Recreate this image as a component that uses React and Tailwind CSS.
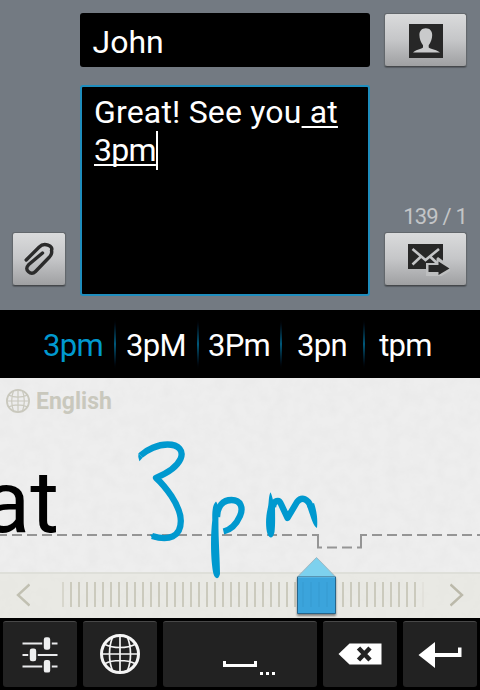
const candidates = ["3pm", "3pM", "3Pm", "3pn", "tpm"];
const ticks = Array.from({ length: 46 }, (_, i) => i);

const softButton =
  "flex h-[54px] items-center justify-center rounded-[3px] border border-[#62676c] border-b-[#45484b] bg-linear-to-b from-[#dadbdc] via-[#c5c6c8] to-[#9fa0a2] shadow-[0_1px_1px_rgba(0,0,0,0.25)]";

const composing = "underline decoration-2 underline-offset-[3px] [text-decoration-skip-ink:none]";

function ContactIcon() {
  return (
    <svg width="34" height="34" viewBox="0 0 34 34" className="mt-px">
      <rect width="34" height="34" fill="#272727" />
      <path
        d="M16.8 4.2C12.6 4.2 10.4 7 10.4 11c0 4 1.5 7.200 3.600 10.200v2.300C11.500 25.500 6 26 4 28.600h27C28.500 26 22.500 25.500 19.700 23.500v-2.300C21.800 18.200 23.200 15 23.200 11c0-4-2.200-6.800-6.400-6.800Z"
        fill="#c9cacb"
      />
    </svg>
  );
}

function ClipIcon() {
  return (
    <svg width="32" height="34" viewBox="0 0 32 34" fill="none" stroke="#2b2b2b" strokeWidth="3.4" strokeLinecap="round" strokeLinejoin="round">
      <path d="M3.200 18 16 5.200Q20 1.200 25 3.200T28.500 8.500Q29.500 12 26 15.500L12.500 29.500Q9 33 5.500 29.800T5.500 22.800L19.500 11" />
    </svg>
  );
}

function SendIcon() {
  return (
    <svg width="42" height="32" viewBox="0 0 42 32">
      <rect width="35" height="25" fill="#272727" />
      <path d="M4.500 5 17.500 16 31 5M4.500 20.500 13 12.500M22 12.500 30 20" fill="none" stroke="#c4c5c7" strokeWidth="2.600" />
      <path d="M18 19h10.500v-4.500L30 13 46 24.500 28.500 35H18Z" fill="#bebfc0" />
      <path d="M20.500 21H30.500v-3.500L41.500 24.500 30.500 31v-3H20.500Z" fill="#272727" />
    </svg>
  );
}

function Globe({ size, color, ring, line }) {
  return (
    <svg width={size} height={size} viewBox="0 0 40 40" fill="none" stroke={color} strokeWidth={line}>
      <circle cx="20" cy="20" r="18.500" strokeWidth={ring} />
      <path d="M20 2v36M2 20h36M12.500 3.500C8.500 13 8.500 27 12.500 36.500M27.500 3.500C31.500 13 31.500 27 27.500 36.500M5 10.500C13 14.500 27 14.500 35 10.500M5 29.500C13 25.500 27 25.500 35 29.500" />
    </svg>
  );
}

function SlidersIcon() {
  return (
    <svg width="36" height="38" viewBox="0 0 36 38">
      <path d="M0.500 7.500H35.500M0.500 19H35.500M0.500 30.500H35.500" stroke="#e9eaec" strokeWidth="2.200" />
      <g fill="#eeeff0" stroke="#222222" strokeWidth="1.600">
        <rect x="21" y="0.400" width="8" height="14.200" rx="3" />
        <rect x="7" y="11.800" width="8" height="14.200" rx="3" />
        <rect x="21" y="23.200" width="8" height="14.200" rx="3" />
      </g>
    </svg>
  );
}

function Key({ className, children }) {
  return (
    <div className={`flex items-center justify-center rounded-[3px] border-t border-[#484848] bg-[#222222] ${className}`}>
      {children}
    </div>
  );
}

function Ink() {
  return (
    <svg className="absolute inset-0" width="480" height="240" viewBox="0 378 480 240">
      <g fill="none" stroke="#959595" strokeWidth="2">
        <path d="M-3 535H317.500" strokeDasharray="10 5" />
        <path d="M312 535H318V547.500H322M327 547.500h10M342 547.500h10M357 547.500H361V535H367" />
        <path d="M372 535H480" strokeDasharray="10 5" />
      </g>
      <g fill="none" stroke="#0099cf" strokeWidth="6.300" strokeLinejoin="round">
        <path d="M140.500 455.500C147 449.500 158 444.500 167.500 444.500C179 444.500 184 451 180.500 459C176 469 164 474.500 156 477.800C164 485 180.800 505 180.800 521C180.800 537 169 541 152 536" />
        <path d="M217 517C217.500 506 223 500 231.500 500C241 500 243.500 508 240 516C236 525 230 530 223.500 531.500" />
        <path d="M273 507C274 500 279 499 281 504L287.500 518L297 502C302 496 308 499 311 507" />
      </g>
      <g fill="#0099cf">
        <path d="M216 501.500C213 504 212 510 212.300 520C210 540 211 563 213.500 574C215 579 218.500 580 220 574C220 560 218 535 218.500 515C219 509 218 504 216 501.500Z" />
        <path d="M270.500 492.300C268.500 496 269 502 268 507C265.500 517 265.500 527 267.500 534C269.500 539 273 539 274.500 532C275.500 524 275 514 275 506C273 501 272 495 270.500 492.300Z" />
        <path d="M307 506L314 503C317 512 317.800 520 317 528C313 526 311 517 307 506Z" />
        <path d="M138.500 453.200L142.600 457.800L139.400 461.200Q137.600 457 138.500 453.200Z" />
        <path d="M150 534.500L158 535L156 540Q151.500 538 150 534.500Z" />
      </g>
    </svg>
  );
}

export default function App() {
  return (
    <div className="flex h-[690px] w-[480px] flex-col overflow-hidden bg-black font-['Roboto',sans-serif]">
      <section className="flex h-[310px] bg-[#737a82] pt-[13px] pl-3">
        <div className="flex h-[273px] w-[68px] flex-col justify-end">
          <button className={`${softButton} w-[54px]`}>
            <ClipIcon />
          </button>
        </div>
        <div className="flex w-[290px] flex-col">
          <div className="flex h-[54px] items-center rounded-[3px] bg-black pt-[4px] pl-[12.500px] text-[32px] leading-[38px] text-white">
            John
          </div>
          <div className="mt-[18px] h-[211px] rounded-[3px] border-2 border-[#1f8dbd] bg-black pt-[6px] pl-3 text-[32px] leading-[38px] tracking-[0.18px] whitespace-nowrap text-white">
            Great! See you
            <span className={composing}>&nbsp;at</span>
            <div className="flex">
              <span className={`${composing} tracking-[-0.7px]`}>3pm</span>
              <span className="h-[39px] w-[2px] bg-white" />
            </div>
          </div>
        </div>
        <div className="ml-[14px] flex h-[273px] w-[83px] flex-col">
          <button className={softButton}>
            <ContactIcon />
          </button>
          <div className="mt-auto mb-[2px] text-right text-[22px] leading-[26px] tracking-[-0.8px] whitespace-nowrap text-[#c3c5c7]">139 / 1</div>
          <button className={`${softButton} pt-[2px] pl-[7px]`}>
            <SendIcon />
          </button>
        </div>
      </section>

      <nav className="flex h-[68px] items-center bg-black pl-8 text-[31px] tracking-[-0.7px] text-white">
        {candidates.map((word, i) => (
          <div key={word} className="flex h-full w-[83px] items-center">
            <span className={`flex-1 pt-[4px] text-center ${i === 0 ? "text-[#0099cf]" : ""}`}>{word}</span>
            {i < 4 && <span className="-mr-px h-[54px] w-[2px] bg-linear-to-b from-black via-[#00587a] to-black" />}
          </div>
        ))}
      </nav>

      <main className="relative flex h-[240px] flex-col overflow-hidden bg-[#eeeeee]">
        <svg className="absolute inset-0" width="480" height="240">
          <filter id="paper">
            <feTurbulence type="fractalNoise" baseFrequency="0.08" numOctaves="4" seed="8" />
            <feColorMatrix values="0 0 0 0 0.5  0 0 0 0 0.5  0 0 0 0 0.5  0.13 0 0 0 -0.04" />
          </filter>
          <rect width="480" height="240" filter="url(#paper)" />
        </svg>
        <div className="relative flex h-[46px] items-center gap-[6px] pl-[6px] text-[23px] font-bold text-[#c9c8bd]">
          <Globe size={24} color="#c9c8bd" ring={3} line={2} />
          <span className="pt-[2px]">English</span>
        </div>
        <div className="relative flex h-[148px] w-[59px] items-end justify-end text-[88px] leading-[108px] font-medium whitespace-nowrap text-black">
          <span className="mb-[16px] font-normal">at</span>
        </div>
        <div className="relative flex h-[46px] items-center border-t-2 border-[#dedfd9] bg-[#e8e7e2]/85">
          <svg className="-mt-[2px] ml-4" width="14" height="24" viewBox="0 0 14 24" fill="none" stroke="#c1c0b2" strokeWidth="2.400">
            <path d="M13.500 1.500 2 12 13.500 22.500" />
          </svg>
          <div className="-mt-[3px] ml-8 flex h-[25px] gap-[6px]">
            {ticks.map((i) => (
              <span key={i} className={`w-[2px] bg-[#cbcabd] ${i === 0 ? "opacity-60" : i === 45 ? "opacity-20" : ""}`} />
            ))}
          </div>
          <svg className="-mt-[2px] ml-[26px]" width="14" height="24" viewBox="0 0 14 24" fill="none" stroke="#bbb9aa" strokeWidth="2.400">
            <path d="M0.500 1.500 12 12 0.500 22.500" />
          </svg>
        </div>
        <Ink />
        <svg className="absolute top-[176px] left-[292px] drop-shadow-[0_2px_1px_rgba(0,0,0,0.45)]" width="50" height="64" viewBox="292 554 50 64">
          <path d="M297.500 577 316.500 557.500 335.500 577Z" fill="#7dd1ee" stroke="#99b8c4" strokeWidth="1" />
          <path d="M297.500 577H335.500V613.500H297.500Z" fill="#3ba4dc" stroke="#27658a" strokeWidth="1" />
          <path d="M298 577.500H335" stroke="#52b2e2" strokeWidth="1" />
          <path d="M303 582v25M311 582v25M319 582v25M327 582v25" stroke="#389fd6" strokeWidth="2" />
        </svg>
      </main>

      <footer className="flex h-[72px] gap-[6px] bg-black p-[3px]">
        <Key className="w-[74px]">
          <SlidersIcon />
        </Key>
        <Key className="w-[74px] pb-[2px]">
          <Globe size={40} color="#f5f5f5" ring={3} line={1.7} />
        </Key>
        <Key className="w-[154px]">
          <svg className="mt-[28px] ml-[20px]" width="54" height="16" viewBox="0 0 54 16" fill="#ffffff">
            <path d="M0 0H3V3H31V0H34V6H0ZM37 11h3v3h-3ZM43 11h3v3h-3ZM49 11h3v3h-3Z" />
          </svg>
        </Key>
        <Key className="w-[74px] pb-px">
          <svg width="44" height="22" viewBox="0 0 44 22">
            <path d="M0.500 11 11.500 0.500H43.500V21.500H11.500Z" fill="#ffffff" />
            <path d="M20.500 5 32 17M32 5 20.500 17" stroke="#222222" strokeWidth="4.600" />
          </svg>
        </Key>
        <Key className="w-[74px]">
          <svg width="44" height="28" viewBox="0 0 44 28" fill="#ffffff">
            <path d="M0.500 14 17 1V12H40V6.500H43.500V16H17V27Z" />
          </svg>
        </Key>
      </footer>
    </div>
  );
}
